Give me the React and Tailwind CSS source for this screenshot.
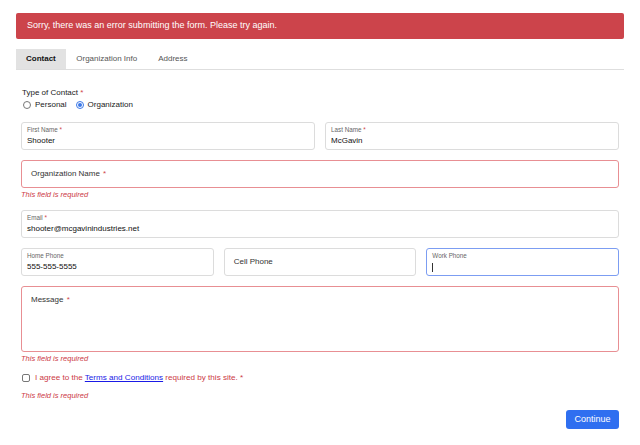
import React from 'react'

function FloatField({ label, value, focused, className = '' }) {
  return (
    <div
      className={`h-[28px] rounded-[3px] border bg-white px-[5px] flex flex-col ${
        focused ? 'border-[#7c9df2]' : 'border-[#dcdcdc]'
      } ${className}`}
    >
      <div className="mt-[3px] text-[6.3px] leading-[8px] text-[#666]">
        {label}
        {label !== 'Home Phone' && label !== 'Work Phone' && <span className="text-[#d0454c]"> *</span>}
      </div>
      <div className="text-[8px] leading-[12px] text-[#111] mt-[1px] h-[12px] flex items-center">
        {value}
        {focused && <span className="block w-px h-[9px] bg-[#333]" />}
      </div>
    </div>
  )
}

function ErrorText({ className = '' }) {
  return <div className={`text-[7.5px] leading-[10px] italic text-[#cc3a45] ${className}`}>This field is required</div>
}

export default function App() {
  return (
    <div className="min-h-screen bg-white font-['Liberation_Sans',Arial,sans-serif] px-[16px] pt-[13px]">
      {/* Alert */}
      <div className="h-[26px] rounded-[2px] bg-[#cc444b] px-[11px] flex items-center text-white text-[9px]">
        Sorry, there was an error submitting the form. Please try again.
      </div>

      {/* Tabs */}
      <div className="mt-[10px] flex border-b border-[#dedede] h-[21px] text-[8px]">
        <div className="px-[10px] bg-[#e2e2e2] flex items-center font-bold text-[#111]">Contact</div>
        <div className="px-[10.5px] flex items-center text-[#555]">Organization Info</div>
        <div className="px-[10.5px] flex items-center text-[#555]">Address</div>
      </div>

      {/* Form */}
      <div className="px-[5px]">
        <div className="mt-[17px] text-[8px] leading-[11px] text-[#222] pl-px">
          Type of Contact <span className="text-[#d0454c]">*</span>
        </div>
        <div className="mt-[1px] flex items-center text-[8px] text-[#222] h-[12px]">
          <span className="ml-[2px] w-[8px] h-[8px] rounded-full border border-[#777] bg-white" />
          <span className="ml-[4px]">Personal</span>
          <span className="ml-[9px] w-[8px] h-[8px] rounded-full border border-[#3b78e7] bg-white flex items-center justify-center">
            <span className="w-[4px] h-[4px] rounded-full bg-[#3b78e7]" />
          </span>
          <span className="ml-[4px]">Organization</span>
        </div>

        <div className="mt-[11px] grid grid-cols-2 gap-[10px]">
          <FloatField label="First Name" value="Shooter" />
          <FloatField label="Last Name" value="McGavin" />
        </div>

        <div className="mt-[10px] h-[28px] rounded-[3px] border border-[#e88f93] flex items-center pl-[9px] text-[8px] text-[#333]">
          Organization Name <span className="text-[#d0454c] ml-[3px]">*</span>
        </div>
        <ErrorText className="mt-[2px]" />

        <FloatField className="mt-[10px]" label="Email" value="shooter@mcgavinindustries.net" />

        <div className="mt-[10px] grid grid-cols-3 gap-[10px]">
          <FloatField label="Home Phone" value="555-555-5555" />
          <div className="h-[28px] rounded-[3px] border border-[#dcdcdc] flex items-center pl-[9px] text-[8px] text-[#333]">
            Cell Phone
          </div>
          <FloatField label="Work Phone" value="" focused />
        </div>

        <div className="mt-[10px] h-[66px] rounded-[3px] border border-[#e88f93] pl-[9px] pt-[8px] text-[8px] leading-[10px] text-[#333]">
          Message <span className="text-[#d0454c] ml-[1px]">*</span>
        </div>
        <ErrorText className="mt-[2px]" />

        <div className="mt-[8px] flex items-center text-[8.1px] text-[#cc3a45] h-[12px]">
          <span className="ml-[1px] w-[8px] h-[8px] rounded-[2px] border border-[#777] bg-white" />
          <span className="ml-[5px]">
            I agree to the{' '}
            <span className="text-[#1a1ae6] underline">Terms and Conditions</span> required by this site.{' '}
            <span>*</span>
          </span>
        </div>
        <ErrorText className="mt-[7px]" />

        <div className="mt-[9px] flex justify-end">
          <button className="h-[19px] w-[53px] rounded-[3px] bg-[#2f6ff0] text-white text-[9px]">Continue</button>
        </div>
      </div>
    </div>
  )
}
